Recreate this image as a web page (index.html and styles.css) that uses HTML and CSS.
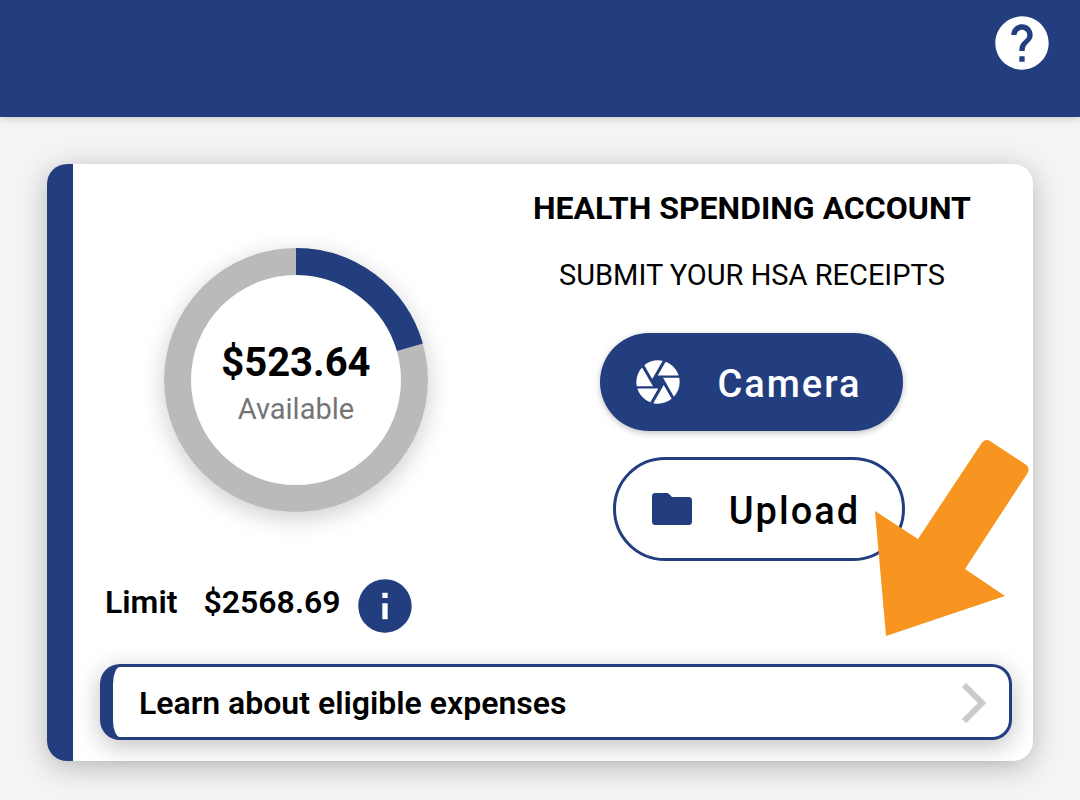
FILE: index.html
```html
<!DOCTYPE html>
<html lang="en">
<head>
    <meta charset="UTF-8">
    <meta name="viewport" content="width=device-width, initial-scale=1.0">
    <title>Health Spending Account</title>
    <link rel="stylesheet" href="styles.css">
</head>
<body>

    <header class="top-bar">
        <button class="help-button" type="button" aria-label="Help">
            <svg viewBox="0 0 24 24" width="64" height="64"><path d="M12 2C6.48 2 2 6.48 2 12s4.48 10 10 10 10-4.48 10-10S17.52 2 12 2zm1 17h-2v-2h2v2zm2.07-7.75l-.9.92C13.45 12.9 13 13.5 13 15h-2v-.5c0-1.1.45-2.1 1.17-2.83l1.24-1.26c.37-.36.59-.86.59-1.41 0-1.1-.9-2-2-2s-2 .9-2 2H8c0-2.21 1.79-4 4-4s4 1.79 4 4c0 .88-.36 1.68-.93 2.25z"/></svg>
        </button>
    </header>

    <main class="card">
        <div class="stripe"></div>
        <div class="card-body">
            <div class="columns">
                <section class="balance">
                    <div class="donut">
                        <svg class="ring" viewBox="0 0 264 264">
                            <circle class="ring-track" cx="132" cy="132" r="118.5"/>
                            <!-- used part of the limit -->
                            <circle class="ring-value" cx="132" cy="132" r="118.5" pathLength="360" stroke-dasharray="74 360" transform="rotate(-90 132 132)"/>
                        </svg>
                        <div class="donut-text">
                            <strong class="amount">$523.64</strong>
                            <span class="caption">Available</span>
                        </div>
                    </div>
                    <div class="limit">
                        <span>Limit</span>
                        <span>$2568.69</span>
                        <button class="info-button" type="button" aria-label="About the limit">
                            <svg viewBox="0 0 24 24" width="64" height="64"><path d="M12 2C6.48 2 2 6.48 2 12s4.48 10 10 10 10-4.48 10-10S17.52 2 12 2zm1 15h-2v-6h2v6zm0-8h-2V7h2v2z"/></svg>
                        </button>
                    </div>
                </section>

                <section class="receipts">
                    <h1>HEALTH SPENDING ACCOUNT</h1>
                    <p>SUBMIT YOUR HSA RECEIPTS</p>
                    <button class="pill camera" type="button">
                        <svg viewBox="0 0 24 24" width="52" height="52"><path d="M9.4 10.5l4.77-8.26C13.47 2.09 12.75 2 12 2c-2.4 0-4.6.85-6.32 2.25l3.66 6.35.06-.1zM21.54 9c-.92-2.92-3.15-5.26-6-6.34L11.88 9h9.66zm.26 1h-7.49l.29.5 4.76 8.25C20.98 16.97 22 14.61 22 12c0-.69-.07-1.35-.2-2zM8.54 12l-3.9-6.75C3.01 7.03 2 9.39 2 12c0 .69.07 1.35.2 2h7.49l-1.15-2zm-6.08 3c.92 2.92 3.15 5.26 6 6.34L12.12 15H2.46zm11.27 0l-3.9 6.76c.7.15 1.42.24 2.17.24 2.4 0 4.6-.85 6.32-2.25l-3.66-6.35-.93 1.6z"/></svg>
                        <span>Camera</span>
                    </button>
                    <button class="pill upload" type="button">
                        <svg viewBox="0 0 24 24" width="48" height="48"><path d="M10 4H3.5C2.6 4 2 4.7 2 5.5v13c0 .8.7 1.5 1.5 1.5h17c.8 0 1.5-.7 1.5-1.5v-11c0-.8-.7-1.5-1.5-1.5H12l-2-2z"/></svg>
                        <span>Upload</span>
                    </button>
                </section>
            </div>

            <a class="learn-link" href="#expenses">
                Learn about eligible expenses
                <svg viewBox="0 0 26 40" width="26" height="40"><path d="M3 2l18 18L3 38"/></svg>
            </a>
        </div>

        <!-- pointer arrow -->
        <svg class="arrow" viewBox="0 0 155 198" width="155" height="198"><path d="M11 198L0 73l43 28L106 6q4-6 9-3l35 23q6 4 2 10L90 131l40 27z"/></svg>
    </main>

</body>
</html>
```
FILE: styles.css
```css
* {
    box-sizing: border-box;
}

body {
    margin: 0;
    min-height: 100vh;
    background-color: #f4f4f4;
    color: #000;
    font-family: Roboto, sans-serif;
}

svg {
    display: block;
    fill: currentColor;
}

button {
    padding: 0;
    border: none;
    background: none;
    font-family: inherit;
    cursor: pointer;
}

.top-bar {
    display: flex;
    justify-content: flex-end;
    height: 117px;
    padding: 11px 26px;
    background-color: #223e7f;
    box-shadow: 0 1px 8px rgba(0, 0, 0, 0.2);
}

.help-button {
    height: 64px;
    color: #fff;
}

.card {
    position: relative;
    display: flex;
    margin: 47px;
    background-color: #fff;
    border-radius: 20px;
    box-shadow: 0 6px 28px rgba(0, 0, 0, 0.25);
}

.stripe {
    width: 26px;
    background-color: #223e7f;
    border-radius: 20px 0 0 20px;
}

.card-body {
    flex: 1;
    padding-bottom: 21px;
}

.columns {
    display: grid;
    grid-template-columns: 22fr 23fr;
    padding-right: 48px;
}

.balance {
    padding-top: 84px;
}

.donut {
    position: relative;
    width: 264px;
    height: 264px;
    margin: 0 auto;
    border-radius: 50%;
    box-shadow: 0 6px 24px rgba(0, 0, 0, 0.2);
}

.ring circle {
    fill: none;
    stroke-width: 27px;
}

.ring .ring-track {
    fill: #fff;
    stroke: #bababa;
}

.ring-value {
    stroke: #223e7f;
}

.donut-text {
    position: absolute;
    inset: 0;
    display: flex;
    flex-direction: column;
    align-items: center;
    justify-content: center;
    padding-top: 10px;
}

.amount {
    font-size: 40px;
    line-height: 48px;
    font-weight: 700;
}

.caption {
    font-size: 29px;
    line-height: 44px;
    color: #757575;
}

.limit {
    display: flex;
    margin: 62px 0 0 32px;
    font-size: 32px;
    line-height: 56px;
    font-weight: 600;
}

.limit span {
    margin-right: 26px;
}

.info-button {
    height: 64px;
    margin-left: -14px;
    color: #223e7f;
}

.receipts {
    display: flex;
    flex-direction: column;
    align-items: center;
    padding-top: 24px;
}

h1 {
    margin: 0;
    font-size: 32px;
    line-height: 40px;
    font-weight: 700;
    white-space: nowrap;
}

p {
    margin: 27px 0 38px;
    font-size: 29px;
    line-height: 40px;
    white-space: nowrap;
}

.pill {
    display: flex;
    align-items: center;
    border-radius: 52px;
    font-size: 38px;
    font-weight: 500;
    letter-spacing: 2px;
}

.pill span {
    padding-top: 4px;
}

.camera {
    gap: 33px;
    height: 98px;
    padding: 0 42px 0 32px;
    background-color: #223e7f;
    color: #fff;
    box-shadow: 0 2px 6px rgba(0, 0, 0, 0.25);
}

.upload {
    gap: 33px;
    height: 104px;
    margin: 26px 0 0 14px;
    padding: 0 42px 0 32px;
    border: 3px solid #223e7f;
    color: #000;
}

.upload svg {
    color: #223e7f;
}

.learn-link {
    display: flex;
    align-items: center;
    justify-content: space-between;
    height: 76px;
    margin: 26px 21px 0 27px;
    padding: 2px 22px 0 26px;
    border: 3px solid #223e7f;
    border-left-width: 13px;
    border-radius: 20px;
    background-color: #fff;
    box-shadow: 0 6px 24px rgba(0, 0, 0, 0.25);
    color: #000;
    font-size: 32px;
    font-weight: 600;
    text-decoration: none;
}

.learn-link path {
    fill: none;
    stroke: #cacaca;
    stroke-width: 6px;
}

.arrow {
    position: absolute;
    right: 3px;
    bottom: 125px;
    color: #f79520;
}
```
